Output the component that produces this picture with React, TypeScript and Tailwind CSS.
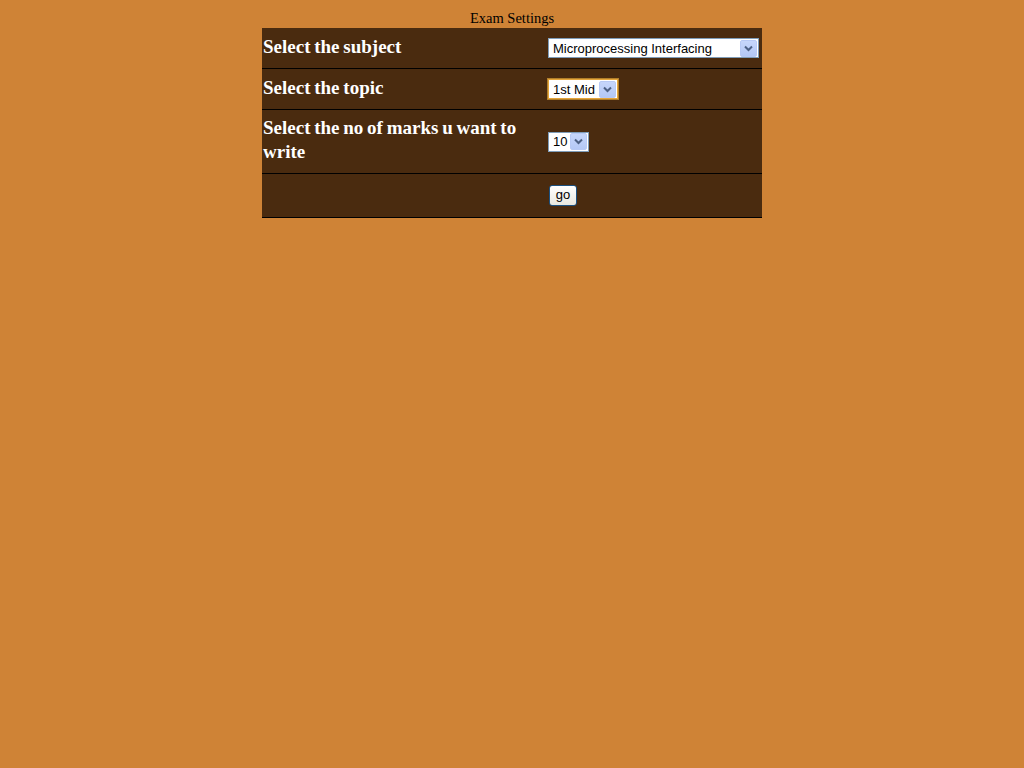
import React from "react";

function Arrow() {
  return (
    <div className="w-[17px] h-[17px] bg-gradient-to-b from-[#c6d6fb] to-[#b4c8f6] border border-[#b7c9f5] rounded-[2px] flex items-center justify-center">
      <svg width="9" height="7" viewBox="0 0 9 7">
        <path d="M1 1.5 L4.5 5 L8 1.5" stroke="#4d6185" strokeWidth="2" fill="none" />
      </svg>
    </div>
  );
}

function Sel({ label, w, border }: { label: string; w: string; border: string }) {
  return (
    <div className={`${w} h-[20px] bg-white border ${border} flex items-center justify-between pl-[4px] pr-[1px]`}>
      <span className="text-[13px] leading-none text-black font-['Liberation_Sans',Arial,sans-serif]">{label}</span>
      <Arrow />
    </div>
  );
}

export default function App() {
  return (
    <div className="min-h-[768px] w-full bg-[#cf8336] font-['Liberation_Serif','Times_New_Roman',serif]">
      <div className="flex flex-col items-center pt-[9px]">
        <div className="text-[14.5px] leading-[19px] text-black">Exam Settings</div>
        <div className="w-[500px] bg-[#4a2b0f] text-white">
          <div className="flex h-[41px] border-b border-black items-center">
            <div className="w-[286px] pl-[1px] text-[19px] font-bold leading-[24px] pb-[2px] [word-spacing:-1px]">Select the subject</div>
            <Sel label="Microprocessing Interfacing" w="w-[211px]" border="border-[#7f9db9]" />
          </div>
          <div className="flex h-[41px] border-b border-black items-center">
            <div className="w-[286px] pl-[1px] text-[19px] font-bold leading-[24px] pb-[2px] [word-spacing:-1px]">Select the topic</div>
            <Sel label="1st Mid" w="w-[70px]" border="border-[#e5a53b] outline outline-1 outline-[#b07e2a]" />
          </div>
          <div className="flex h-[64px] border-b border-black items-center">
            <div className="w-[286px] pl-[1px] pr-[20px] text-[19px] font-bold leading-[24px] pb-[4px] [word-spacing:-1px]">Select the no of marks u want to write</div>
            <Sel label="10" w="w-[41px]" border="border-[#7f9db9]" />
          </div>
          <div className="flex h-[44px] border-b border-black items-center">
            <div className="w-[287px]" />
            <button className="h-[21px] w-[28px] bg-gradient-to-b from-white to-[#e8e8e0] border border-[#1c5180] rounded-[3px] text-[13px] leading-none text-black font-['Liberation_Sans',Arial,sans-serif] pb-[2px]">go</button>
          </div>
        </div>
      </div>
    </div>
  );
}
